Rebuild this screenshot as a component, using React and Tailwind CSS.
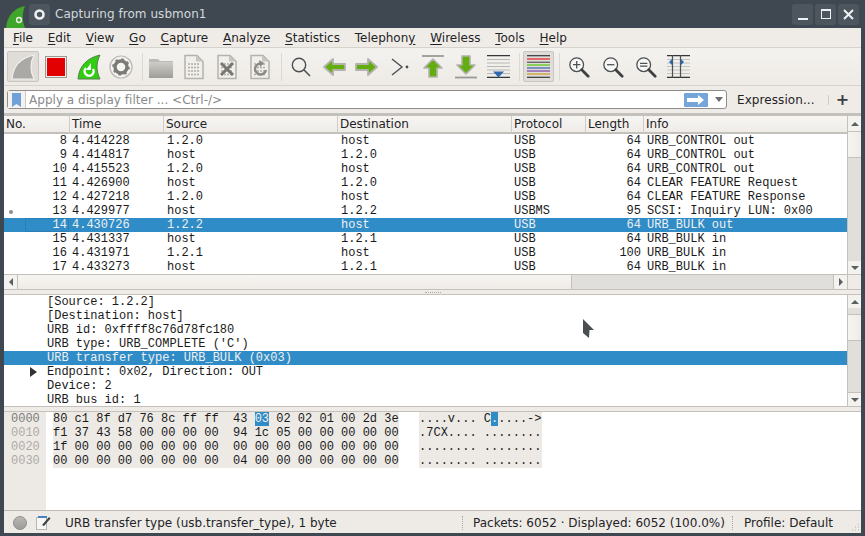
import React from "react";

const menus = [
  ["F", "ile"],
  ["E", "dit"],
  ["V", "iew"],
  ["G", "o"],
  ["C", "apture"],
  ["A", "nalyze"],
  ["S", "tatistics"],
  ["Telephon", "y", ""],
  ["W", "ireless"],
  ["T", "ools"],
  ["H", "elp"],
];

const packets = [
  ["8", "4.414228", "1.2.0", "host", "USB", "64", "URB_CONTROL out"],
  ["9", "4.414817", "host", "1.2.0", "USB", "64", "URB_CONTROL out"],
  ["10", "4.415523", "1.2.0", "host", "USB", "64", "URB_CONTROL out"],
  ["11", "4.426900", "host", "1.2.0", "USB", "64", "CLEAR FEATURE Request"],
  ["12", "4.427218", "1.2.0", "host", "USB", "64", "CLEAR FEATURE Response"],
  ["13", "4.429977", "host", "1.2.2", "USBMS", "95", "SCSI: Inquiry LUN: 0x00"],
  ["14", "4.430726", "1.2.2", "host", "USB", "64", "URB_BULK out"],
  ["15", "4.431337", "host", "1.2.1", "USB", "64", "URB_BULK in"],
  ["16", "4.431971", "1.2.1", "host", "USB", "100", "URB_BULK in"],
  ["17", "4.433273", "host", "1.2.1", "USB", "64", "URB_BULK in"],
];

const details = [
  "[Source: 1.2.2]",
  "[Destination: host]",
  "URB id: 0xffff8c76d78fc180",
  "URB type: URB_COMPLETE ('C')",
  "URB transfer type: URB_BULK (0x03)",
  "Endpoint: 0x02, Direction: OUT",
  "Device: 2",
  "URB bus id: 1",
];

const hexRows = [
  "f1 37 43 58 00 00 00 00  94 1c 05 00 00 00 00 00",
  "1f 00 00 00 00 00 00 00  00 00 00 00 00 00 00 00",
  "00 00 00 00 00 00 00 00  04 00 00 00 00 00 00 00",
];

const asciiRows = [".7CX.... ........", "........ ........", "........ ........"];

const columns = "grid grid-cols-[65px_94px_174px_174px_74px_58px_1fr]";

const arrowPoints = {
  up: "2,8 6,4 10,8",
  down: "2,4 6,8 10,4",
  left: "8,2 4,6 8,10",
  right: "4,2 8,6 4,10",
};

const ArrowBox = ({ dir, className }) => (
  <div className={`flex items-center justify-center bg-[#f4f2ef] ${className}`}>
    <svg width="12" height="12" viewBox="0 0 12 12">
      <polygon points={arrowPoints[dir]} fill="#5a5f63" />
    </svg>
  </div>
);

const FileIcon = ({ children }) => (
  <svg width="20" height="26" viewBox="0 0 20 26">
    <path d="M1 1.5h12l6 6v17H1z" fill="#f1efeb" stroke="#b5b2ac" strokeWidth="1.5" />
    <path d="M12 1.5v6h7z" fill="#c9c6c0" />
    <g stroke="#b0ada7" strokeWidth="1.6" strokeDasharray="2 1">
      <path d="M4 10h12M4 13.5h12M4 17h12M4 20.5h12" />
    </g>
    {children}
  </svg>
);

const Magnifier = ({ sign }) => (
  <svg width="22" height="22" viewBox="0 0 24 24">
    <circle cx="9.5" cy="9.5" r="7.5" fill="#f8f7f5" stroke="#4b5053" strokeWidth="1.4" />
    <path d="M15 15l7 7" stroke="#3c4043" strokeWidth="3" strokeLinecap="round" />
    {sign === "in" && <path d="M5.5 9.5h8M9.5 5.5v8" stroke="#4b5053" strokeWidth="1.4" />}
    {sign === "out" && <path d="M5.5 9.5h8" stroke="#4b5053" strokeWidth="1.4" />}
    {sign === "normal" && <path d="M5.5 8h8M5.5 11h8" stroke="#4b5053" strokeWidth="1.4" />}
  </svg>
);

const GreenArrow = ({ d }) => (
  <svg width="23" height="22" viewBox="0 0 23 22">
    <path d={d} fill="#64ad10" stroke="#b3b2ac" strokeWidth="1.8" strokeLinejoin="round" />
  </svg>
);

const Separator = ({ className }) => <div className={`h-[28px] w-px bg-[#dcd9d4] ${className}`} />;

function TitleBar() {
  return (
    <div className="flex h-[28px] shrink-0 items-center pl-[5px] pr-[6px]">
      <svg width="21" height="24" viewBox="0 0 21 24" className="mt-[3px]">
        <path d="M1 24C2 12 9 4 20 2c-3 7-3 15 0 22z" fill="#3fa52b" />
        <circle cx="14" cy="16" r="2.4" fill="none" stroke="#e8f5e2" strokeWidth="1.5" />
      </svg>
      <div className="ml-[3px] flex h-[21px] w-[21px] items-center justify-center rounded-[3px] bg-[#4d565e]">
        <svg width="13" height="13" viewBox="0 0 13 13">
          <circle cx="6.5" cy="6.5" r="4" fill="none" stroke="#eef0f1" strokeWidth="2.6" />
        </svg>
      </div>
      <span className="ml-[5px] text-[12px] leading-none tracking-[0.05px] text-[#d3d8dc]">Capturing from usbmon1</span>
      <div className="ml-auto flex gap-[2px]">
        <div className="flex h-[21px] w-[21px] items-center justify-center rounded-[3px] bg-[#4d565e]">
          <div className="mt-[9px] h-[2px] w-[10px] bg-[#eef0f1]" />
        </div>
        <div className="flex h-[21px] w-[21px] items-center justify-center rounded-[3px] bg-[#4d565e]">
          <div className="h-[10px] w-[10px] border border-t-2 border-[#eef0f1]" />
        </div>
        <div className="flex h-[21px] w-[21px] items-center justify-center rounded-[3px] bg-[#4d565e]">
          <svg width="11" height="11" viewBox="0 0 11 11">
            <path d="M1 1l9 9M10 1l-9 9" stroke="#eef0f1" strokeWidth="2" />
          </svg>
        </div>
      </div>
    </div>
  );
}

function MenuBar() {
  return (
    <div className="flex h-[19px] shrink-0 items-center bg-[#efece8] pl-[1.5px] text-[#1f2326]">
      {menus.map((m) => (
        <span key={m.join("")} className="px-[7.4px] leading-none">
          {m.length === 3 ? (
            <>
              {m[0]}
              <span className="underline underline-offset-2">{m[1]}</span>
            </>
          ) : (
            <>
              <span className="underline underline-offset-2">{m[0]}</span>
              {m[1]}
            </>
          )}
        </span>
      ))}
    </div>
  );
}

function ToolBar() {
  return (
    <div className="flex h-[39px] shrink-0 items-center border-y border-[#d6d3ce] bg-gradient-to-b from-[#f4f2ef] to-[#eeebe6] pl-[3px]">
      <div className="flex h-[31px] w-[32px] items-center justify-center rounded-[2px] border border-[#c9c6c1] bg-[#e0ddd8]">
        <svg width="24" height="26" viewBox="0 0 24 26">
          <path d="M1 25C2 12 10 4 23 1c-4 8-4 16 0 24z" fill="#aaa9a5" stroke="#f1f0ec" strokeWidth="1.2" />
        </svg>
      </div>
      <div className="ml-[6px] flex h-[22px] w-[22px] items-center justify-center border border-[#9a9893] bg-[#f2f0ec]">
        <div className="h-[18px] w-[18px] bg-[#e30000]" />
      </div>
      <svg width="24" height="26" viewBox="0 0 24 26" className="ml-[10px]">
        <path d="M1 25C2 12 10 4 23 1c-4 8-4 16 0 24z" fill="#2fce10" stroke="#5a7d50" strokeWidth="1" />
        <path d="M9 14a4.5 4.5 0 1 0 7 1" fill="none" stroke="#fff" strokeWidth="2.4" />
        <path d="M14 9v7h-5z" fill="#fff" />
      </svg>
      <svg width="24" height="24" viewBox="0 0 24 24" className="ml-[8px]">
        <circle cx="12" cy="12" r="11" fill="#f6f5f2" stroke="#b9b7b2" strokeWidth="1.2" />
        <circle cx="12" cy="12" r="6" fill="none" stroke="#7a7a77" strokeWidth="3.4" />
        <circle cx="12" cy="12" r="8" fill="none" stroke="#7a7a77" strokeWidth="1.6" strokeDasharray="2.5 3.8" />
      </svg>
      <Separator className="ml-[9px]" />
      <svg width="24" height="22" viewBox="0 0 24 22" className="ml-[6px]">
        <defs>
          <linearGradient id="folderFill" x1="0" y1="0" x2="0" y2="1">
            <stop offset="0" stopColor="#cfcdc8" />
            <stop offset="1" stopColor="#9f9d98" />
          </linearGradient>
        </defs>
        <path d="M0 3h9l2 2h13v17H0z" fill="#bdbbb6" />
        <rect x="0" y="6" width="24" height="16" fill="url(#folderFill)" />
      </svg>
      <div className="ml-[11px] flex">
        <FileIcon />
      </div>
      <div className="ml-[13px] flex">
        <FileIcon>
          <path d="M4 9l12 12M16 9L4 21" stroke="#77766f" strokeWidth="3" />
        </FileIcon>
      </div>
      <div className="ml-[13px] flex">
        <FileIcon>
          <path d="M13 10a5.5 5.5 0 1 0 3 6" fill="none" stroke="#8c8a84" strokeWidth="2.4" />
          <path d="M9 6l5 3-4 4z" fill="#8c8a84" />
        </FileIcon>
      </div>
      <Separator className="ml-[11px]" />
      <svg width="20" height="20" viewBox="0 0 20 20" className="ml-[9px]">
        <circle cx="8" cy="8" r="6.7" fill="none" stroke="#4b5053" strokeWidth="1.4" />
        <path d="M12.8 12.8L19 19" stroke="#4b5053" strokeWidth="1.6" />
      </svg>
      <div className="ml-[12px] flex">
        <GreenArrow d="M1 11l9-8v5h12v6H10v5z" />
      </div>
      <div className="ml-[9px] flex">
        <GreenArrow d="M22 11l-9-8v5H1v6h12v5z" />
      </div>
      <svg width="18" height="20" viewBox="0 0 18 20" className="ml-[13px]">
        <path d="M1 2l10 8-10 8" fill="none" stroke="#4b5053" strokeWidth="1.4" />
        <circle cx="16" cy="10" r="1.4" fill="#4b5053" />
      </svg>
      <svg width="24" height="24" viewBox="0 0 24 24" className="ml-[12px]">
        <path d="M1 1h22" stroke="#9c9a95" strokeWidth="1.8" />
        <path d="M12 4L21 13h-5v9H8v-9H3z" fill="#64ad10" stroke="#b3b2ac" strokeWidth="1.6" strokeLinejoin="round" />
      </svg>
      <svg width="24" height="24" viewBox="0 0 24 24" className="ml-[9px]">
        <path d="M12 19L3 10h5V1h8v9h5z" fill="#64ad10" stroke="#b3b2ac" strokeWidth="1.6" strokeLinejoin="round" />
        <path d="M1 22.5h22" stroke="#9c9a95" strokeWidth="1.8" />
      </svg>
      <svg width="23" height="23" viewBox="0 0 23 23" className="ml-[9px]">
        <path d="M0 .7h23M0 22.3h23" stroke="#33373a" strokeWidth="1.2" />
        <path d="M0 4.5h23M0 8h23M0 11.5h23M0 15h23M0 18.5h23" stroke="#b9b9b3" strokeWidth="1.2" />
        <path d="M6 16.5h11l-5.5 6z" fill="#2f68ad" />
      </svg>
      <Separator className="ml-[9px]" />
      <div className="ml-[3px] flex h-[31px] w-[31px] items-center justify-center rounded-[2px] border border-[#c9c6c1] bg-[#e0ddd8]">
        <svg width="23" height="23" viewBox="0 0 23 23">
          <path d="M0 .7h23" stroke="#33373a" strokeWidth="1.2" />
          <path d="M0 4h23" stroke="#e01b24" strokeWidth="1.2" />
          <path d="M0 7.2h23" stroke="#33373a" strokeWidth="1" />
          <path d="M0 10h23" stroke="#4fc40c" strokeWidth="1.2" />
          <path d="M0 13h23" stroke="#3b5fb5" strokeWidth="1.2" />
          <path d="M0 16h23" stroke="#7d3fa8" strokeWidth="1.2" />
          <path d="M0 19h23" stroke="#c59a1f" strokeWidth="1.2" />
          <path d="M0 22.3h23" stroke="#33373a" strokeWidth="1.2" />
        </svg>
      </div>
      <Separator className="ml-[5px]" />
      <div className="ml-[8px] flex">
        <Magnifier sign="in" />
      </div>
      <div className="ml-[12px] flex">
        <Magnifier sign="out" />
      </div>
      <div className="ml-[11px] flex">
        <Magnifier sign="normal" />
      </div>
      <svg width="23" height="23" viewBox="0 0 23 23" className="ml-[10px]">
        <path d="M0 .7h23M0 22.3h23" stroke="#33373a" strokeWidth="1.2" />
        <path d="M0 4.5h23M0 8h23M0 11.5h23M0 15h23M0 18.5h23" stroke="#c4c4be" strokeWidth="1.1" />
        <path d="M5.5 0v23M13.5 0v23" stroke="#4b5053" strokeWidth="1.2" />
        <path d="M2 5.5l3.5 3.5v-7zM17 5.5l-3.5 3.5v-7z" transform="translate(0 1.5)" fill="#2f68ad" />
      </svg>
    </div>
  );
}

function FilterBar() {
  return (
    <div className="flex h-[28px] shrink-0 items-center border-b border-[#c4c1bc] bg-[#efece8] pl-[3px]">
      <div className="flex h-[19px] w-[720px] items-center rounded-[3px] border border-[#8f8e8a] bg-white">
        <div className="flex h-full w-[18px] shrink-0 items-center justify-center border-r border-[#cfccc7] bg-[#f4f2ef]">
          <svg width="9" height="14" viewBox="0 0 9 14">
            <path d="M0 0h9v14L4.5 11 0 14z" fill="#6fa0d8" />
          </svg>
        </div>
        <span className="ml-[3px] leading-none tracking-[0.03px] text-[#8a8a8a]">Apply a display filter ... &lt;Ctrl-/&gt;</span>
        <div className="ml-auto flex h-[14px] w-[24px] items-center justify-center rounded-[1px] bg-[#76a6d9]">
          <svg width="18" height="10" viewBox="0 0 18 10">
            <path d="M0 3h11V0l6 5-6 5V7H0z" fill="#fff" />
          </svg>
        </div>
        <svg width="10" height="6" viewBox="0 0 10 6" className="ml-[6px] mr-[2px]">
          <path d="M1 0h8L5 5z" fill="#6b6f72" />
        </svg>
      </div>
      <span className="ml-[10px] leading-none tracking-[0.08px] text-[#1f2326]">Expression...</span>
      <div className="ml-[13px] h-[10px] w-px bg-[#cfccc7]" />
      <span className="ml-[7px] text-[16px] font-bold leading-none text-[#3a3e41]">+</span>
    </div>
  );
}

function VerticalScroll({ children }) {
  return <div className="flex w-[14px] shrink-0 flex-col border-l border-[#c4c1bc] bg-[#e0dfdb]">{children}</div>;
}

function PacketList() {
  return (
    <div className="flex h-[175px] shrink-0 flex-col border-t-2 border-[#c4c1bc] bg-white">
      <div className="flex min-h-0 flex-1">
        <div className="min-w-0 flex-1">
          <div className={`${columns} h-[18px] items-center border-b-2 border-[#c4c1bc] bg-gradient-to-b from-[#f7f5f2] to-[#efece8] text-[#1f2326]`}>
            {["No.", "Time", "Source", "Destination", "Protocol", "Length", "Info"].map((h, i) => (
              <div key={h} className={`h-full pl-[2px] leading-[17px] ${i > 0 ? "border-l border-[#cfccc7]" : ""}`}>
                {h}
              </div>
            ))}
          </div>
          <div className="font-['Liberation_Mono',monospace] text-[12px] text-[#1a1a1a]">
            {packets.map((p) => {
              const selected = p[0] === "14";
              return (
                <div key={p[0]} className={`${columns} h-[14px] leading-[14px] ${selected ? "bg-[#308cc6] text-[#eff0f1]" : ""}`}>
                  <div className={`relative pr-[2px] text-right ${selected ? "ml-[21px] outline outline-1 -outline-offset-1 outline-[#2b7fb4]" : ""}`}>
                    {p[0] === "13" && <span className="absolute left-[5px] top-[6px] h-[4px] w-[4px] rounded-full bg-[#8c8c8c]" />}
                    {p[0]}
                  </div>
                  <div className="pl-[3px]">{p[1]}</div>
                  <div className="pl-[4px]">{p[2]}</div>
                  <div className="pl-[4px]">{p[3]}</div>
                  <div className="pl-[3px]">{p[4]}</div>
                  <div className="pr-[2px] text-right">{p[5]}</div>
                  <div className="whitespace-pre pl-[4px]">{p[6]}</div>
                </div>
              );
            })}
          </div>
        </div>
        <VerticalScroll>
          <ArrowBox dir="up" className="h-[15px]" />
          <div className="h-[27px] border-y border-[#c4c1bc] bg-gradient-to-r from-[#f6f4f1] to-[#efece8]" />
          <div className="flex-1" />
          <ArrowBox dir="down" className="h-[13px]" />
        </VerticalScroll>
      </div>
      <div className="flex h-[15px] shrink-0 border-t border-[#c4c1bc] bg-[#e0dfdb]">
        <ArrowBox dir="left" className="w-[14px] border-r border-[#c4c1bc]" />
        <div className="w-[554px] border-r border-[#c4c1bc] bg-gradient-to-b from-[#f6f4f1] to-[#efece8]" />
        <div className="flex-1" />
        <ArrowBox dir="right" className="w-[14px] border-l border-[#c4c1bc]" />
        <div className="w-[14px] border-l border-[#c4c1bc] bg-[#efece8]" />
      </div>
    </div>
  );
}

function Splitter({ dots, className }) {
  return (
    <div className={`flex shrink-0 items-center justify-center border-y border-[#c4c1bc] bg-[#efece8] ${className}`}>
      {dots && <div className="h-px w-[16px] border-t border-dotted border-[#aaa8a3]" />}
    </div>
  );
}

function PacketDetails() {
  return (
    <div className="relative flex h-[111px] shrink-0 overflow-hidden bg-white">
      <div className="min-w-0 flex-1 font-['Liberation_Mono',monospace] text-[12px] text-[#1a1a1a]">
        {details.map((d) => {
          const selected = d.startsWith("URB transfer");
          return (
            <div key={d} className={`relative h-[14px] whitespace-pre pl-[43px] leading-[14px] ${selected ? "bg-[#308cc6] text-[#eff0f1]" : ""}`}>
              {d.startsWith("Endpoint") && (
                <svg width="7" height="10" viewBox="0 0 7 10" className="absolute left-[26px] top-[2px]">
                  <path d="M0 0l7 5-7 5z" fill="#2f3336" />
                </svg>
              )}
              {d}
            </div>
          );
        })}
      </div>
      <VerticalScroll>
        <ArrowBox dir="up" className="h-[13px]" />
        <div className="h-[6px]" />
        <div className="h-[27px] border-y border-[#c4c1bc] bg-gradient-to-r from-[#f6f4f1] to-[#efece8]" />
        <div className="flex-1" />
        <ArrowBox dir="down" className="h-[14px] border-t border-[#c4c1bc]" />
      </VerticalScroll>
      <svg width="13" height="20" viewBox="0 0 13 20" className="absolute left-[578px] top-[24px]">
        <path d="M1 0l11 11H7.5L7 19 1 14z" fill="#4b4f52" />
      </svg>
    </div>
  );
}

function HexPane() {
  return (
    <div className="flex min-h-0 flex-1 bg-white font-['Liberation_Mono',monospace] text-[12px] leading-[14px]">
      <div className="w-[42px] shrink-0 bg-[#edeae6] pl-[7px] text-[#adaba7]">
        <div className="text-[#7b7b78]">0000</div>
        <div>0010</div>
        <div>0020</div>
        <div>0030</div>
      </div>
      <div className="ml-[7px] self-start whitespace-pre bg-[#edeae6] text-[#1a1a1a]">
        <div>
          80 c1 8f d7 76 8c ff ff  43 <span className="bg-[#308cc6] text-[#eff0f1]">03</span> 02 02 01 00 2d 3e
        </div>
        {hexRows.map((r, i) => (
          <div key={i}>{r}</div>
        ))}
      </div>
      <div className="ml-[20.4px] self-start whitespace-pre bg-[#edeae6] text-[#1a1a1a]">
        <div>
          ....v... C<span className="bg-[#308cc6] text-[#eff0f1]">.</span>....-&gt;
        </div>
        {asciiRows.map((r, i) => (
          <div key={i}>{r}</div>
        ))}
      </div>
    </div>
  );
}

function StatusBar() {
  return (
    <div className="relative flex h-[23px] shrink-0 items-center border-t border-[#bdbab5] bg-[#eeebe7] pt-[1px] text-[#1f2326]">
      <div className="ml-[9px] h-[14px] w-[14px] rounded-full border border-[#8f8e8a] bg-gradient-to-b from-[#b9b8b4] to-[#9c9b97]" />
      <svg width="15" height="15" viewBox="0 0 15 15" className="ml-[9px]">
        <rect x="0.5" y="2.5" width="10" height="12" fill="#f7f7f5" stroke="#b8b6b1" />
        <path d="M2 1h9v2H2z" fill="#4a7fc0" />
        <path d="M6 10l7-8 1.5 1.5L8 11z" fill="#3d4246" />
      </svg>
      <span className="ml-[14px] whitespace-pre">URB transfer type (usb.transfer_type), 1 byte</span>
      <div className="absolute left-[458px] h-[14px] border-l border-dotted border-[#aaa8a3]" />
      <span className="absolute left-[469px] whitespace-pre">Packets: 6052 · Displayed: 6052 (100.0%)</span>
      <div className="absolute left-[728px] h-[14px] border-l border-dotted border-[#aaa8a3]" />
      <span className="absolute left-[740px] whitespace-pre">Profile: Default</span>
      <svg width="9" height="9" viewBox="0 0 9 9" className="absolute bottom-[1px] right-[1px]">
        <path d="M7 1h1M4 4h1M7 4h1M1 7h1M4 7h1M7 7h1" stroke="#b5b3ae" strokeWidth="1" />
      </svg>
    </div>
  );
}

export default function App() {
  return (
    <div className="flex h-[536px] w-[865px] flex-col overflow-hidden bg-[#3f4850] font-['DejaVu_Sans',sans-serif] text-[12px]">
      <TitleBar />
      <div className="ml-[4px] mr-[4px] mb-[3px] flex min-h-0 flex-1 flex-col bg-[#efece8]">
        <MenuBar />
        <ToolBar />
        <FilterBar />
        <PacketList />
        <Splitter dots className="h-[6px]" />
        <PacketDetails />
        <Splitter dots={false} className="h-[6px]" />
        <HexPane />
        <StatusBar />
      </div>
    </div>
  );
}
